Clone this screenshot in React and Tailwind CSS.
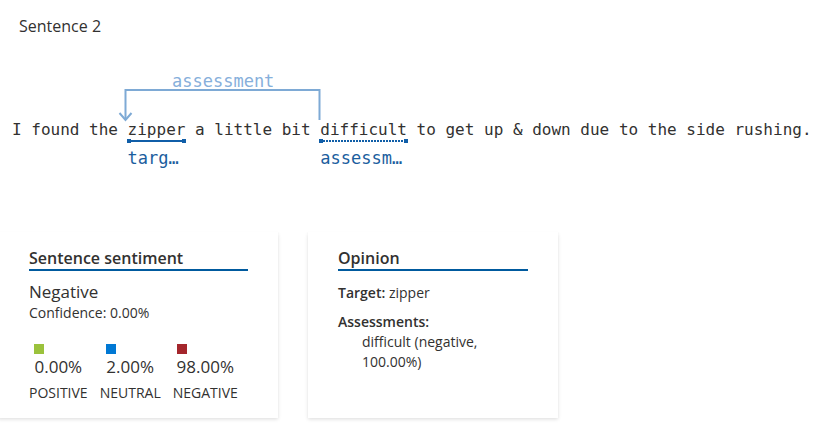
export default function App() {
  const ui = "font-['Open_Sans','Noto_Sans',sans-serif]";
  const mono = "font-['DejaVu_Sans_Mono','Liberation_Mono',monospace]";
  return (
    <div className={`w-[818px] h-[426px] bg-white overflow-hidden text-[#323130] ${ui}`}>
      <div className="pt-[15px] pl-[19px] text-[16px] leading-[22px]">Sentence 2</div>

      <div className={`relative mt-[33px] h-[100px] pt-[50px] ${mono}`}>
        <svg className="absolute left-0 top-0" width="818" height="52" viewBox="0 0 818 52" fill="none">
          <path d="M125.5 50 V20 H319.5 V50" stroke="#7eaad5" strokeWidth="2" />
          <path d="M119.5 43 L125.5 50 L131.5 43" stroke="#7eaad5" strokeWidth="2" />
        </svg>
        <span className="absolute left-[172px] top-[1px] text-[17px] leading-[20px] text-[#86afdb]">assessment</span>
        <div className="pl-[12px] text-[16px] leading-[20px] whitespace-pre text-[#323130]">
          <span>I found the </span>
          <span className="relative">
            zipper
            <span className="absolute left-0 right-0 top-[20px] h-[2px] bg-[#105ea8]" />
            <span className="absolute left-[-1px] top-[19px] w-[4px] h-[4px] bg-[#105ea8]" />
            <span className="absolute right-[-1px] top-[19px] w-[4px] h-[4px] bg-[#105ea8]" />
            <span className="absolute left-0 top-[28px] text-[17px] leading-[20px] text-[#1b5e9e]">targ…</span>
          </span>
          <span> a little bit </span>
          <span className="relative">
            difficult
            <span className="absolute left-0 right-0 top-[20px] h-[2px] bg-[repeating-linear-gradient(90deg,#105ea8_0_2px,transparent_2px_3px)]" />
            <span className="absolute left-[-1px] top-[19px] w-[4px] h-[4px] bg-[#105ea8]" />
            <span className="absolute right-[-1px] top-[19px] w-[4px] h-[4px] bg-[#105ea8]" />
            <span className="absolute left-0 top-[28px] text-[17px] leading-[20px] text-[#1b5e9e]">assessm…</span>
          </span>
          <span> to get up &amp; down due to the side rushing.</span>
        </div>
      </div>

      <div className="mt-[62px] flex gap-[30px] -ml-[2px]">
        <div className="w-[280px] h-[186px] bg-white pl-[31px] pr-[30px] pt-[15px] shadow-[0_1.6px_3.6px_rgba(0,0,0,0.13),0_0.3px_0.9px_rgba(0,0,0,0.11)]">
          <div className="text-[16px] leading-[22px] font-semibold border-b-2 border-[#005a9e]">Sentence sentiment</div>
          <div className="mt-[10px] text-[17px] leading-[22px]">Negative</div>
          <div className="mt-[1px] text-[14px] leading-[18px]">Confidence: 0.00%</div>
          <div className="mt-[22px] flex gap-[12px] text-[14px]">
            <div className="flex flex-col items-center">
              <div className="flex flex-col items-start">
                <div className="w-[10px] h-[10px] bg-[#9bc23c]" />
                <div className="mt-[2px] text-[17px] leading-[22px]">0.00%</div>
              </div>
              <div className="mt-[6px] leading-[18px]">POSITIVE</div>
            </div>
            <div className="flex flex-col items-center">
              <div className="flex flex-col items-start">
                <div className="w-[10px] h-[10px] bg-[#0078d4]" />
                <div className="mt-[2px] text-[17px] leading-[22px]">2.00%</div>
              </div>
              <div className="mt-[6px] leading-[18px]">NEUTRAL</div>
            </div>
            <div className="flex flex-col items-center">
              <div className="flex flex-col items-start">
                <div className="w-[10px] h-[10px] bg-[#a4262c]" />
                <div className="mt-[2px] text-[17px] leading-[22px]">98.00%</div>
              </div>
              <div className="mt-[6px] leading-[18px]">NEGATIVE</div>
            </div>
          </div>
        </div>

        <div className="w-[250px] h-[186px] bg-white pl-[30px] pr-[30px] pt-[15px] shadow-[0_1.6px_3.6px_rgba(0,0,0,0.13),0_0.3px_0.9px_rgba(0,0,0,0.11)]">
          <div className="text-[16px] leading-[22px] font-semibold border-b-2 border-[#005a9e]">Opinion</div>
          <div className="mt-[12px] text-[14px] leading-[20px]">
            <span className="font-semibold">Target:</span> zipper
          </div>
          <div className="mt-[9px] text-[14px] leading-[20px] font-semibold">Assessments:</div>
          <div className="pl-[24px] text-[14px] leading-[20px]">difficult (negative, 100.00%)</div>
        </div>
      </div>
    </div>
  );
}
